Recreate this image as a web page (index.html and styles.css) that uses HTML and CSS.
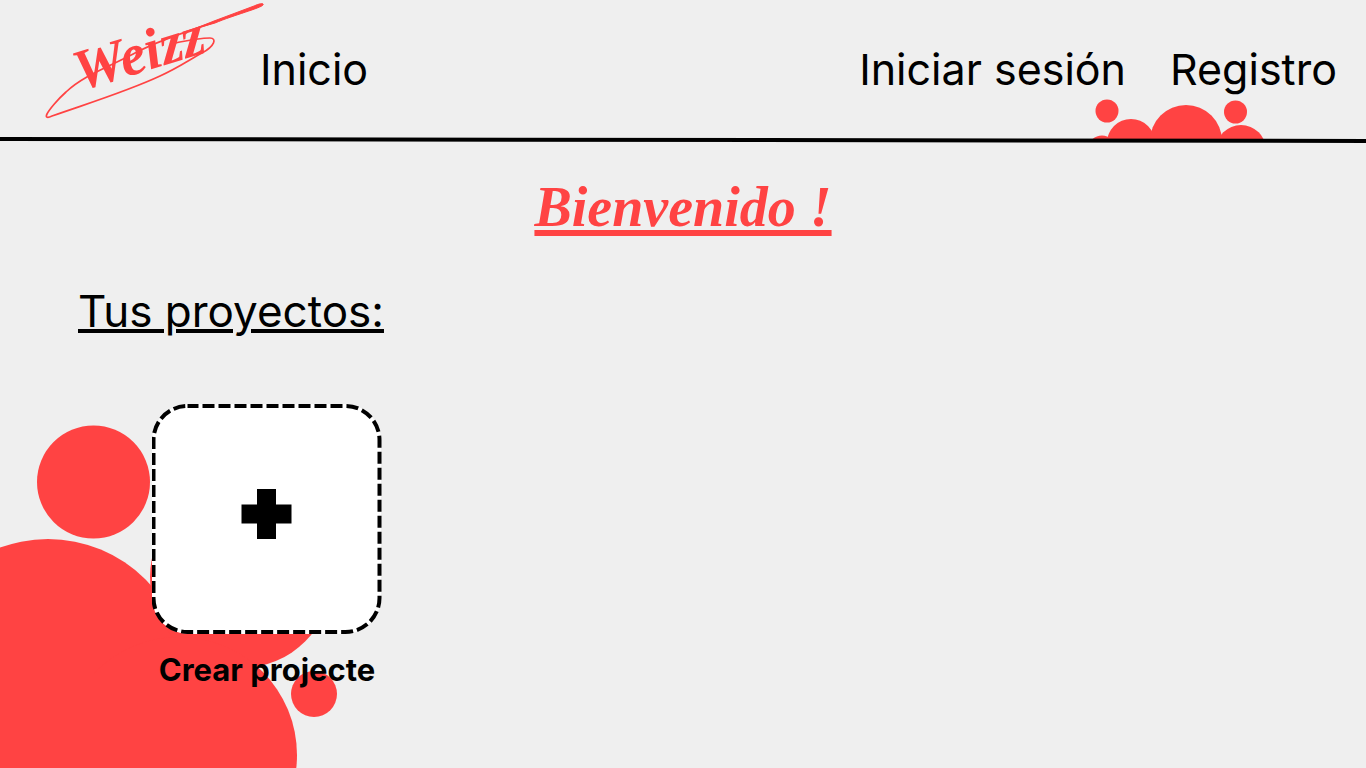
FILE: index.html
```html
<!DOCTYPE html>
<html lang="es">
<head>
<meta charset="utf-8">
<meta name="viewport" content="width=device-width, initial-scale=1">
<title>Weizz</title>
<link rel="stylesheet" href="styles.css">
</head>
<body>
<header class="header">
  <nav class="nav">
    <a class="logo" href="#" aria-label="Weizz">
      <svg class="logo-art" viewBox="0 0 220 118" fill="none">
        <path class="swoosh" d="M171 21 C150 28 118 38 93 51 C65 66 40 74 22 91 C13 99 5 109 3 113 C1 117 4 117 8 115 C48 101 84 90 116 75 C134 67 145 59 158 52 C171 45 173 37 166 37 C155 37 141 40 126 43"/>
        <path class="swoosh-tip" d="M150 28 L170 20 L210 5 C217 2 220 2 219 4 C217 7 190 14 171 22 Z"/>
        <text class="logo-text" transform="translate(36 90) rotate(-17)">Weizz</text>
      </svg>
    </a>
    <a class="nav-link" href="#">Inicio</a>
    <a class="nav-link nav-end" href="#">Iniciar sesión</a>
    <a class="nav-link nav-last" href="#">Registro</a>
  </nav>
  <svg class="header-blobs" viewBox="0 0 176 42" aria-hidden="true">
    <circle cx="17" cy="14" r="11.5"/>
    <circle cx="12" cy="53" r="14.5"/>
    <circle cx="41" cy="46" r="24"/>
    <circle cx="96" cy="44" r="36"/>
    <circle cx="151" cy="53" r="25"/>
    <circle cx="145.5" cy="15" r="11.5"/>
  </svg>
  <svg class="header-rule" viewBox="0 0 1366 6" preserveAspectRatio="none" aria-hidden="true">
    <path d="M0 0 L1366 2 V6 L0 4 Z"/>
  </svg>
</header>
<main class="main">
  <h1 class="welcome">Bienvenido !</h1>
  <section class="projects">
    <h2 class="projects-title">Tus proyectos:</h2>
    <button class="create" type="button">
      <svg class="create-card" viewBox="0 0 230 230" aria-hidden="true">
        <rect class="card-fill" x="0" y="0" width="229" height="230" rx="37"/>
        <rect class="card-dash" x="1.5" y="2" width="226" height="226" rx="34"/>
        <path d="M105 85 H124 V100.500 H139.500 V119.500 H124 V135 H105 V119.500 H89.500 V100.500 H105 Z"/>
      </svg>
      <span class="create-label">Crear projecte</span>
    </button>
  </section>
</main>
<svg class="page-blobs" viewBox="0 0 340 344" aria-hidden="true">
  <circle cx="93.500" cy="58" r="56.5"/>
  <circle cx="48" cy="253" r="138"/>
  <circle cx="241" cy="153" r="91"/>
  <circle cx="179" cy="331" r="118"/>
  <path d="M0 250 H180 V344 H0 Z"/>
  <circle cx="314" cy="270" r="23"/>
</svg>
</body>
</html>
```
FILE: styles.css
```css
* {
  box-sizing: border-box;
}

body {
  position: relative;
  min-height: 100vh;
  margin: 0;
  overflow-x: hidden;
  background: #efefef;
  color: #000;
  font-family: Inter, "Liberation Sans", sans-serif;
}

.header {
  position: relative;
}

.nav {
  display: flex;
  align-items: center;
  gap: 44px;
  height: 137px;
  padding: 0 16px 0 44px;
}

.logo {
  display: block;
  width: 220px;
  height: 118px;
  margin: 0 -48px 18px 0;
}

.logo-art {
  display: block;
  width: 220px;
  height: 118px;
  overflow: visible;
}

.swoosh {
  stroke: #ff4343;
  stroke-width: 1.7;
}

.swoosh-tip {
  fill: #ff4343;
  stroke: #ff4343;
}

.logo-text {
  fill: #ff4343;
  font: italic 700 58px "Liberation Serif", serif;
}

.nav-link {
  color: inherit;
  font-size: 43px;
  font-weight: 400;
  line-height: 54px;
  text-decoration: none;
  white-space: nowrap;
}

.nav-end {
  margin-left: auto;
}

.nav-last {
  min-width: 180px;
}

.header-blobs {
  position: absolute;
  right: 100px;
  bottom: 4px;
  width: 176px;
  height: 42px;
  fill: #ff4343;
}

.header-rule {
  position: relative;
  display: block;
  width: 100%;
  height: 6px;
}

.main {
  position: relative;
  z-index: 1;
  padding: 28px 78px 0;
}

.welcome {
  margin: 0;
  color: #ff4343;
  font: italic 700 56px/72px "Liberation Serif", serif;
  text-align: center;
  text-decoration: underline;
  text-decoration-thickness: 6px;
  text-decoration-skip-ink: none;
  text-underline-offset: 4px;
}

.projects-title {
  margin: 40px 0 65px;
  font-size: 44px;
  font-weight: 400;
  line-height: 56px;
  text-decoration: underline;
  text-decoration-thickness: 4px;
  text-underline-offset: 2px;
}

.create {
  display: flex;
  flex-direction: column;
  align-items: center;
  gap: 16px;
  margin-left: 74px;
  padding: 0;
  border: 0;
  background: none;
  color: inherit;
  font: inherit;
  cursor: pointer;
}

.create-card {
  width: 230px;
  height: 230px;
}

.card-fill {
  fill: #fff;
}

.card-dash {
  fill: none;
  stroke: #000;
  stroke-width: 4;
  stroke-dasharray: 12 4;
  stroke-dashoffset: 1;
}

.create-label {
  font-size: 31px;
  font-weight: 700;
  line-height: 40px;
}

.page-blobs {
  position: absolute;
  bottom: 0;
  left: 0;
  width: 340px;
  height: 344px;
  fill: #ff4343;
}
```
